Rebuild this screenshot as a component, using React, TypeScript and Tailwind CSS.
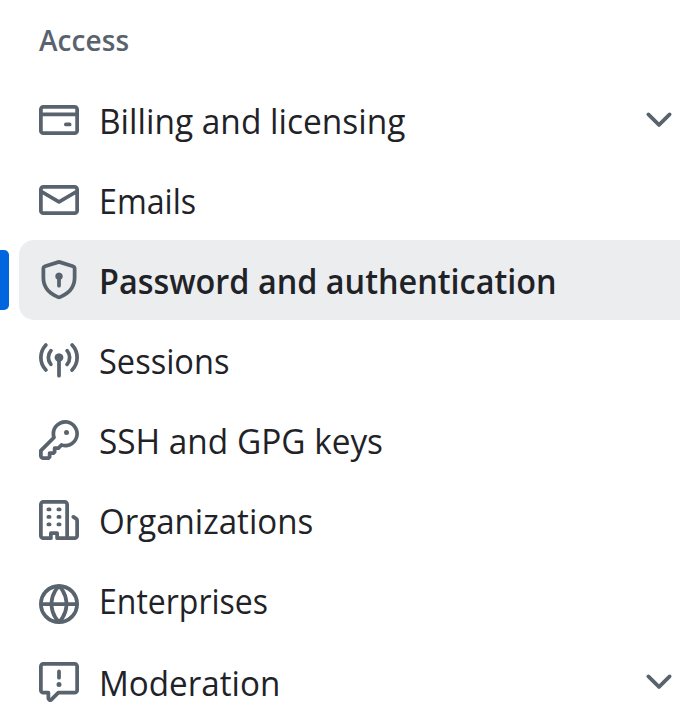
type Item = {
  label: string;
  path: string;
  text: string;
  row?: string;
  icon?: string;
  active?: boolean;
  expandable?: boolean;
};

const CHEVRON =
  "M12.78 5.22a.749.749 0 0 1 0 1.06l-4.25 4.25a.749.749 0 0 1-1.06 0L3.22 6.28a.749.749 0 1 1 1.06-1.06L8 8.939l3.72-3.719a.749.749 0 0 1 1.06 0Z";

const items: Item[] = [
  {
    label: "Billing and licensing",
    text: "scale-x-[0.956]",
    expandable: true,
    path: "M10.75 9a.75.75 0 0 0 0 1.5h1.5a.75.75 0 0 0 0-1.5h-1.5ZM0 3.75C0 2.784.784 2 1.75 2h12.5c.966 0 1.75.784 1.75 1.75v8.5A1.75 1.75 0 0 1 14.25 14H1.75A1.75 1.75 0 0 1 0 12.25ZM14.5 6.5h-13v5.75c0 .138.112.25.25.25h12.5a.25.25 0 0 0 .25-.25Zm0-2.75a.25.25 0 0 0-.25-.25H1.75a.25.25 0 0 0-.25.25V5h13Z",
  },
  {
    label: "Emails",
    text: "scale-x-[0.92]",
    path: "M1.75 2h12.5c.966 0 1.75.784 1.75 1.75v8.5A1.75 1.75 0 0 1 14.25 14H1.75A1.75 1.75 0 0 1 0 12.25v-8.5C0 2.784.784 2 1.75 2ZM1.5 12.251c0 .138.112.25.25.25h12.5a.25.25 0 0 0 .25-.25V5.809L8.38 9.397a.75.75 0 0 1-.76 0L1.5 5.809v6.442Zm13-8.181v-.32a.25.25 0 0 0-.25-.25H1.75a.25.25 0 0 0-.25.25v.32L8 7.88Z",
  },
  {
    label: "Password and authentication",
    text: "scale-x-[0.925]",
    active: true,
    path: "m8.533.133 5.25 1.68A1.75 1.75 0 0 1 15 3.48V7c0 1.566-.32 3.182-1.303 4.682-.983 1.498-2.585 2.813-5.032 3.855a1.697 1.697 0 0 1-1.33 0c-2.447-1.042-4.049-2.357-5.032-3.855C1.32 10.182 1 8.566 1 7V3.48a1.75 1.75 0 0 1 1.217-1.667l5.25-1.68a1.748 1.748 0 0 1 1.066 0Zm-.61 1.429.001.001-5.25 1.68a.251.251 0 0 0-.174.237V7c0 1.36.275 2.666 1.057 3.859.784 1.194 2.121 2.342 4.366 3.298a.196.196 0 0 0 .154 0c2.245-.957 3.582-2.103 4.366-3.297C13.225 9.666 13.5 8.358 13.5 7V3.48a.25.25 0 0 0-.174-.238l-5.25-1.68a.25.25 0 0 0-.153 0ZM9.5 6.5c0 .536-.286 1.032-.75 1.3v2.45a.75.75 0 0 1-1.5 0V7.8A1.5 1.5 0 1 1 9.5 6.5Z",
  },
  {
    label: "Sessions",
    text: "scale-x-[0.93]",
    path: "M8.75 8.582v5.668a.75.75 0 0 1-1.5 0V8.582a1.75 1.75 0 1 1 1.5 0Zm3.983-7.125a.75.75 0 0 1 1.06.026A7.976 7.976 0 0 1 16 7c0 2.139-.84 4.083-2.207 5.517a.75.75 0 1 1-1.086-1.034A6.474 6.474 0 0 0 14.5 7a6.474 6.474 0 0 0-1.793-4.483.75.75 0 0 1 .026-1.06Zm-9.466 0c.3.286.312.76.026 1.06A6.474 6.474 0 0 0 1.5 7a6.47 6.47 0 0 0 1.793 4.483.75.75 0 0 1-1.086 1.034A7.973 7.973 0 0 1 0 7c0-2.139.84-4.083 2.207-5.517a.75.75 0 0 1 1.06-.026Zm8.556 2.321A4.988 4.988 0 0 1 13 7a4.988 4.988 0 0 1-1.177 3.222.75.75 0 1 1-1.146-.967A3.487 3.487 0 0 0 11.5 7c0-.86-.309-1.645-.823-2.255a.75.75 0 0 1 1.146-.967Zm-6.492.958A3.48 3.48 0 0 0 4.5 7a3.48 3.48 0 0 0 .823 2.255.75.75 0 0 1-1.146.967A4.981 4.981 0 0 1 3 7a4.982 4.982 0 0 1 1.188-3.236.75.75 0 1 1 1.143.972Z",
  },
  {
    label: "SSH and GPG keys",
    text: "scale-x-[0.953]",
    path: "M10.5 0a5.499 5.499 0 1 1-1.288 10.848l-.932.932a.749.749 0 0 1-.53.22H7v.75a.749.749 0 0 1-.22.53l-.5.5a.749.749 0 0 1-.53.22H5v.75a.749.749 0 0 1-.22.53l-.5.5a.749.749 0 0 1-.53.22h-2A1.75 1.75 0 0 1 0 14.25v-2c0-.199.079-.389.22-.53l4.932-4.932A5.5 5.5 0 0 1 10.5 0Zm-4 5.5c-.001.431.069.86.205 1.269a.75.75 0 0 1-.181.768L1.5 12.56v1.69c0 .138.112.25.25.25h1.69l.06-.06v-1.19a.75.75 0 0 1 .75-.75h1.19l.06-.06v-1.19a.75.75 0 0 1 .75-.75h1.19l1.023-1.025a.75.75 0 0 1 .768-.18A4 4 0 1 0 6.5 5.5ZM11 6a1 1 0 1 1 0-2 1 1 0 0 1 0 2Z",
  },
  {
    label: "Organizations",
    text: "scale-x-[0.945]",
    path: "M1.75 16A1.75 1.75 0 0 1 0 14.25V1.75C0 .784.784 0 1.75 0h8.5C11.216 0 12 .784 12 1.75v12.5c0 .085-.006.168-.018.25h2.268a.25.25 0 0 0 .25-.25V8.285a.25.25 0 0 0-.111-.208l-1.055-.703a.749.749 0 1 1 .832-1.248l1.055.703c.487.325.779.871.779 1.456v5.965A1.75 1.75 0 0 1 14.25 16h-3.5a.766.766 0 0 1-.197-.026c-.099.017-.2.026-.303.026h-3a.75.75 0 0 1-.75-.75V14h-1v1.25a.75.75 0 0 1-.75.75Zm-.25-1.75c0 .138.112.25.25.25H4v-1.25a.75.75 0 0 1 .75-.75h2.5a.75.75 0 0 1 .75.75v1.25h2.25a.25.25 0 0 0 .25-.25V1.75a.25.25 0 0 0-.25-.25h-8.5a.25.25 0 0 0-.25.25ZM3.75 6h.5a.75.75 0 0 1 0 1.5h-.5a.75.75 0 0 1 0-1.5ZM3 3.75A.75.75 0 0 1 3.75 3h.5a.75.75 0 0 1 0 1.5h-.5A.75.75 0 0 1 3 3.75Zm4 3A.75.75 0 0 1 7.75 6h.5a.75.75 0 0 1 0 1.5h-.5A.75.75 0 0 1 7 6.75ZM7.75 3h.5a.75.75 0 0 1 0 1.5h-.5a.75.75 0 0 1 0-1.5ZM3 9.75A.75.75 0 0 1 3.75 9h.5a.75.75 0 0 1 0 1.5h-.5A.75.75 0 0 1 3 9.75ZM7.75 9h.5a.75.75 0 0 1 0 1.5h-.5a.75.75 0 0 1 0-1.5Z",
  },
  {
    label: "Enterprises",
    text: "scale-x-[0.914]",
    icon: "mt-6",
    path: "M8 0a8 8 0 1 1 0 16A8 8 0 0 1 8 0ZM5.78 8.75a9.64 9.64 0 0 0 1.363 4.177c.255.426.542.832.857 1.215.245-.296.551-.705.857-1.215A9.64 9.64 0 0 0 10.22 8.75Zm4.44-1.5a9.64 9.64 0 0 0-1.363-4.177c-.307-.51-.612-.919-.857-1.215a9.927 9.927 0 0 0-.857 1.215A9.64 9.64 0 0 0 5.78 7.25Zm-5.944 1.5H1.543a6.507 6.507 0 0 0 4.666 5.5c-.123-.181-.24-.365-.352-.552-.715-1.192-1.437-2.874-1.581-4.948Zm-2.733-1.5h2.733c.144-2.074.866-3.756 1.58-4.948.12-.197.237-.381.353-.552a6.507 6.507 0 0 0-4.666 5.5Zm10.181 1.5c-.144 2.074-.866 3.756-1.58 4.948-.12.197-.237.381-.353.552a6.507 6.507 0 0 0 4.666-5.5Zm2.733-1.5a6.507 6.507 0 0 0-4.666-5.5c.123.181.24.365.353.552.714 1.192 1.436 2.874 1.58 4.948Z",
  },
  {
    label: "Moderation",
    text: "scale-x-[0.948]",
    row: "mt-0.5",
    expandable: true,
    path: "M0 1.75C0 .784.784 0 1.75 0h12.5C15.216 0 16 .784 16 1.75v9.5A1.75 1.75 0 0 1 14.25 13H8.06l-2.573 2.573A1.458 1.458 0 0 1 3 14.543V13H1.75A1.75 1.75 0 0 1 0 11.25Zm1.75-.25a.25.25 0 0 0-.25.25v9.5c0 .138.112.25.25.25h2a.75.75 0 0 1 .75.75v2.19l2.72-2.72a.749.749 0 0 1 .53-.22h6.5a.25.25 0 0 0 .25-.25v-9.5a.25.25 0 0 0-.25-.25Zm7 2.25v2.5a.75.75 0 0 1-1.5 0v-2.5a.75.75 0 0 1 1.5 0ZM9 9a1 1 0 1 1-2 0 1 1 0 0 1 2 0Z",
  },
];

function Icon({ d, className = "" }: { d: string; className?: string }) {
  return (
    <svg viewBox="0 0 16 16" className={`size-10 shrink-0 fill-[#59636e] ${className}`} aria-hidden="true">
      <path d={d} />
    </svg>
  );
}

function NavRow({ item }: { item: Item }) {
  return (
    <li className={`flex h-20 shrink-0 items-center ${item.row ?? ""}`}>
      <span className={`h-[60px] w-[9px] shrink-0 rounded-r-[5px] ${item.active ? "bg-[#0065de]" : ""}`} />
      <a
        className={`ml-2.5 flex h-20 flex-1 items-start rounded-l-[15px] pl-5 pr-px ${item.active ? "bg-[#ecedef] font-semibold" : ""}`}
      >
        <Icon d={item.path} className={item.icon ?? "mt-5"} />
        <span className={`ml-5 mt-px origin-left whitespace-nowrap leading-20 ${item.text}`}>{item.label}</span>
        {item.expandable && <Icon d={CHEVRON} className="mt-5 ml-auto" />}
      </a>
    </li>
  );
}

export default function App() {
  return (
    <nav className="flex h-[720px] w-[680px] flex-col overflow-hidden bg-white font-['Open_Sans','Noto_Sans',sans-serif] text-[35px] text-[#1f2328]">
      <h2 className="h-20 shrink-0 pl-[39px] pt-px text-[28px] font-semibold leading-[79px] tracking-[0.1px] text-[#59636e]">
        Access
      </h2>
      <ul className="flex flex-col">
        {items.map((item) => (
          <NavRow key={item.label} item={item} />
        ))}
      </ul>
    </nav>
  );
}
